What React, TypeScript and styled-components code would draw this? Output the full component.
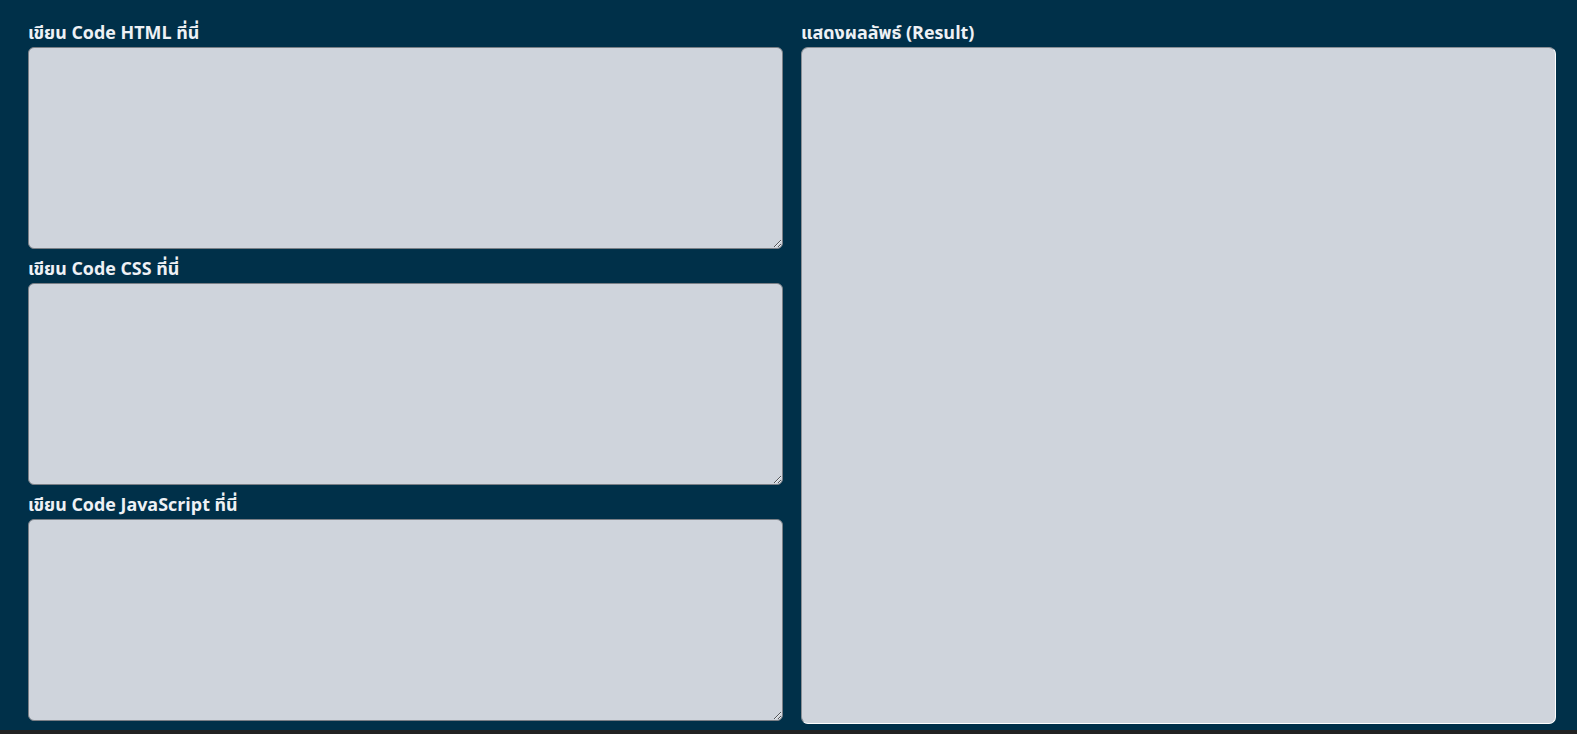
import React from "react";
import styled, { createGlobalStyle } from "styled-components";

const GlobalStyle = createGlobalStyle`
  html, body {
    margin: 0;
    padding: 0;
    background: #222222;
  }
  * { box-sizing: border-box; }
`;

const Page = styled.main`
  height: 730px;
  background: #003049;
  display: grid;
  grid-template-columns: 755px 755px;
  column-gap: 18px;
  padding: 21px 21px 0 28px;
  font-family: "Open Sans", "Noto Sans Thai", "Noto Sans", sans-serif;
`;

const Column = styled.div`
  display: flex;
  flex-direction: column;
`;

const Section = styled.section`
  display: flex;
  flex-direction: column;
  gap: 4px;
  & + & {
    margin-top: 8px;
  }
`;

const Label = styled.label`
  display: block;
  font-size: 17.9px;
  line-height: 22px;
  font-weight: 700;
  color: #eef1f5;
  white-space: nowrap;
`;

const Editor = styled.textarea`
  display: block;
  width: 100%;
  height: 202px;
  margin: 0;
  background: #cfd4dc;
  border: 1px solid #7a7f86;
  border-radius: 6px;
  resize: vertical;
  font-family: "Liberation Mono", monospace;
  font-size: 13px;
  outline: none;
`;

const Result = styled.div`
  width: 100%;
  height: 677px;
  background: #cfd4dc;
  border: 1px solid;
  border-color: #8a8f96 #ffffff #ffffff #8a8f96;
  border-radius: 7px;
`;

export default function App() {
  return (
    <>
      <GlobalStyle />
      <Page>
        <Column>
          <Section>
            <Label>เขียน Code HTML ที่นี่</Label>
            <Editor spellCheck={false} />
          </Section>
          <Section>
            <Label>เขียน Code CSS ที่นี่</Label>
            <Editor spellCheck={false} />
          </Section>
          <Section>
            <Label>เขียน Code JavaScript ที่นี่</Label>
            <Editor spellCheck={false} />
          </Section>
        </Column>
        <Column>
          <Section>
            <Label>แสดงผลลัพธ์ (Result)</Label>
            <Result />
          </Section>
        </Column>
      </Page>
    </>
  );
}
